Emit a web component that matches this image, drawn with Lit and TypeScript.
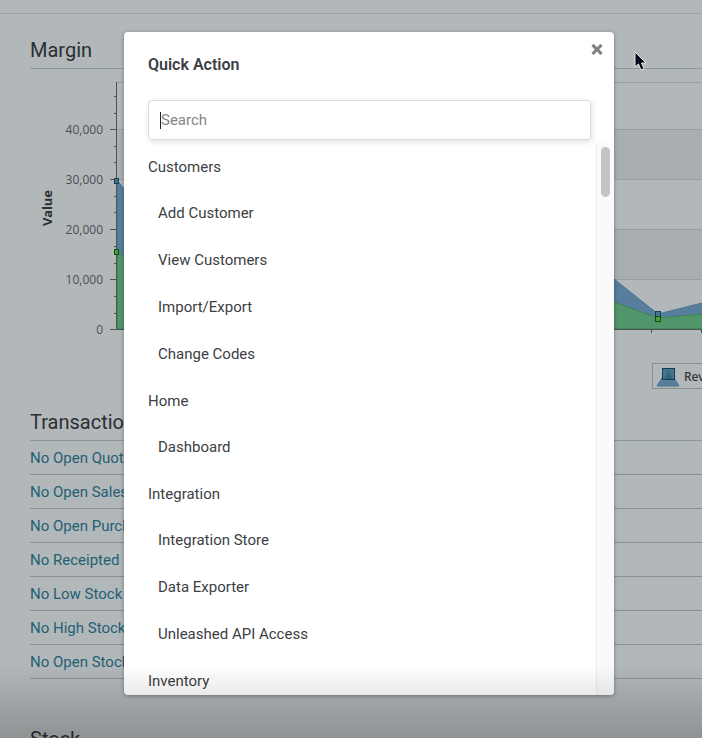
import { LitElement, html, svg, css } from "lit";
import { customElement } from "lit/decorators.js";

const ui = css`
  * { box-sizing: border-box; }
  :host { font-family: Roboto, "Open Sans", sans-serif; color: #3c4043; }
`;

@customElement("margin-chart")
class MarginChart extends LitElement {
  static styles = [ui, css`
    :host { display: block; overflow: hidden; }
    .chart { display: block; width: 100%; height: 328px; }
    .tick { font: 500 12px "Open Sans", sans-serif; fill: #4b4f50; text-anchor: end; }
    .axis-title { font: bold 13px "Noto Sans", sans-serif; fill: #2d3133; text-anchor: middle; }
    .legend-text { font: 500 12px "Noto Sans", sans-serif; fill: #33373a; }
    .band { fill: #a9aeb0; }
    .line { fill: none; stroke: #989da0; }
    .axis { fill: none; stroke: #4c5254; }
    .blue { fill: #577f9d; stroke: #4c7695; }
    .green { fill: #50966a; stroke: #3d8057; }
    .mark-blue { fill: #427590; stroke: #1b3c4c; }
    .mark-green { fill: #4e9f38; stroke: #124b18; }
    .legend { fill: none; stroke: #8b9092; }
  `];

  render() {
    const ticks = [40000, 30000, 20000, 10000, 0];
    const minor = [96, 113, 146, 162, 196, 212, 246, 263, 296, 313];
    return html`
      <svg class="chart" role="img" aria-label="Margin chart">
        <g transform="translate(0 -69)">
          <rect class="band" x="117" y="130" width="1000" height="50"></rect>
          <rect class="band" x="117" y="230" width="1000" height="50"></rect>
          <path class="line" d="M117 82.5H1200M117 129.5H1200M117 179.5H1200M117 229.5H1200M117 279.5H1200"></path>
          <path class="blue" d="M117 180L166 243 280 210 400 262 520 205 614 279 658 314 702 303 800 280V329H117Z"></path>
          <path class="green" d="M117 251L166 288 280 270 400 300 520 264 614 302 658 318 702 314 800 304V329H117Z"></path>
          <path class="axis" d="M116.5 82V329.5H1200M651.5 330v3M701.5 330v3"></path>
          ${ticks.map((v, i) => svg`
            <path class="axis" d=${`M110 ${129.5 + i * 50}h6`}></path>
            <text class="tick" x="103" y=${134 + i * 50}>${v.toLocaleString("en-US")}</text>`)}
          ${minor.map((y) => svg`<path class="axis" d=${`M114 ${y}.5h2`}></path>`)}
          <text class="axis-title" transform="translate(52 208) rotate(-90)">Value</text>
          <rect class="mark-blue" x="114.5" y="178.5" width="4" height="5"></rect>
          <rect class="mark-green" x="114.5" y="249.5" width="4" height="5"></rect>
          <rect class="mark-blue" x="655.5" y="311.5" width="5" height="5"></rect>
          <rect class="mark-green" x="655.5" y="316.5" width="5" height="5"></rect>
          <rect class="legend" x="652.5" y="363.5" width="180" height="25"></rect>
          <path class="blue" d="M657 386L668 368 679 386Z"></path>
          <rect class="mark-blue" x="662.5" y="368.5" width="12" height="11"></rect>
          <path fill="#35637d" d="M664 379L668.5 371 673 379Z"></path>
          <text class="legend-text" x="684" y="381">Revenue</text>
        </g>
      </svg>`;
  }
}

@customElement("dashboard-page")
class DashboardPage extends LitElement {
  static styles = [ui, css`
    :host { display: block; background: #b2b7b9; }
    .topbar { height: 14px; border-bottom: 1px solid #9da3a5; }
    .body { padding-top: 16px; }
    .title {
      margin: 0 0 0 30px; height: 39px; line-height: 41px; color: #2b2f32;
      font-size: 20px; font-weight: 400; border-bottom: 1px solid #8b9799;
    }
    .transactions { padding-top: 5px; }
    .list { list-style: none; margin: 0 0 0 30px; padding: 0; }
    .row { height: 34px; line-height: 34px; font-size: 15px; border-bottom: 1px solid #8b9193; }
    .link { color: #1f6075; text-decoration: none; }
    .stock { padding-top: 40px; }
  `];

  render() {
    const rows = [
      "No Open Quotes", "No Open Sales", "No Open Purchases", "No Receipted",
      "No Low Stock", "No High Stock", "No Open Stock",
    ];
    return html`
      <div class="topbar"></div>
      <main class="body">
        <section>
          <h2 class="title">Margin</h2>
          <margin-chart></margin-chart>
        </section>
        <section class="transactions">
          <h2 class="title">Transactions</h2>
          <ul class="list">
            ${rows.map((r) => html`<li class="row"><a class="link" href="#">${r}</a></li>`)}
          </ul>
        </section>
        <section class="stock"><h2 class="title">Stock</h2></section>
      </main>`;
  }
}

@customElement("quick-action")
class QuickAction extends LitElement {
  static styles = [ui, css`
    :host {
      display: flex; flex-direction: column; min-width: 0; background: #fff;
      border-radius: 4px; overflow: hidden; box-shadow: 0 1px 4px rgba(0, 0, 0, 0.35);
    }
    .head { display: flex; justify-content: space-between; align-items: flex-start; padding: 10px 10px 0 24px; height: 68px; }
    .heading { margin: 0; padding-top: 13px; font-size: 16px; line-height: 20px; font-weight: 600; }
    .close { display: flex; padding: 0; border: 0; background: none; }
    .search { position: relative; margin: 0 23px 0 24px; }
    .input {
      display: block; width: 100%; height: 40px; padding: 0 12px 1px; border: 1px solid #dadcde;
      border-radius: 4px; background: #fff; font: 15px Roboto, sans-serif; color: #303436;
      box-shadow: 1px 2px 6px rgba(0, 0, 0, 0.12); outline: none;
    }
    .input::placeholder { color: #858585; opacity: 1; }
    .caret { position: absolute; left: 12px; top: 12px; width: 1px; height: 17px; background: #222; }
    .scroll { flex: 1; min-height: 0; display: flex; margin-top: 3px; }
    .items { flex: 1; overflow: hidden; padding-top: 1px; }
    .group { margin: 0; padding-left: 24px; font-size: 15px; font-weight: 400; line-height: 46px; }
    .list { list-style: none; margin: 0; padding: 0 0 0 34px; }
    .item { height: 47px; line-height: 47px; font-size: 15px; }
    .link { color: inherit; text-decoration: none; }
    .track { width: 18px; padding: 4px; background: #fafafa; border-left: 1px solid #ececec; }
    .thumb { width: 9px; height: 50px; border-radius: 5px; background: #c4c4c4; }
  `];

  render() {
    const groups: [string, string[]][] = [
      ["Customers", ["Add Customer", "View Customers", "Import/Export", "Change Codes"]],
      ["Home", ["Dashboard"]],
      ["Integration", ["Integration Store", "Data Exporter", "Unleashed API Access"]],
      ["Inventory", []],
    ];
    return html`
      <div class="head">
        <h1 class="heading">Quick Action</h1>
        <button class="close" aria-label="Close">
          <svg width="14" height="14" viewBox="0 0 14 14">
            <path d="M3.5 3.9L10.5 10.9M10.5 3.9L3.5 10.9" stroke="#808080" stroke-width="3" stroke-linecap="square" stroke-linejoin="round"></path>
          </svg>
        </button>
      </div>
      <div class="search">
        <input class="input" type="text" aria-label="Search" placeholder="Search" />
        <span class="caret"></span>
      </div>
      <div class="scroll">
        <nav class="items">
          ${groups.map(([name, items]) => html`
            <h2 class="group">${name}</h2>
            <ul class="list">
              ${items.map((t) => html`<li class="item"><a class="link" href="#">${t}</a></li>`)}
            </ul>`)}
        </nav>
        <div class="track"><div class="thumb"></div></div>
      </div>`;
  }
}

@customElement("app-root")
class AppRoot extends LitElement {
  static styles = [ui, css`
    :host { display: block; position: relative; height: 100vh; overflow: hidden; background: #b2b7b9; }
    .overlay { position: absolute; inset: 0; display: flex; padding: 32px 88px 43px 124px; }
    .dialog { flex: 1; }
    .shade {
      position: absolute; left: 0; right: 0; bottom: 0; height: 74px; pointer-events: none;
      background: linear-gradient(rgba(0, 0, 0, 0), rgba(0, 0, 0, 0.2));
    }
    .pointer { position: absolute; left: 634px; top: 51px; }
  `];

  render() {
    return html`
      <dashboard-page></dashboard-page>
      <div class="overlay"><quick-action class="dialog" role="dialog" aria-label="Quick Action"></quick-action></div>
      <div class="shade"></div>
      <svg class="pointer" width="14" height="21" viewBox="0 0 14 21">
        <path d="M1 1V16L4.5 13 7 19 10 17.6 7.5 12H12Z" fill="#08081c" stroke="#e4e6ea"></path>
      </svg>`;
  }
}
